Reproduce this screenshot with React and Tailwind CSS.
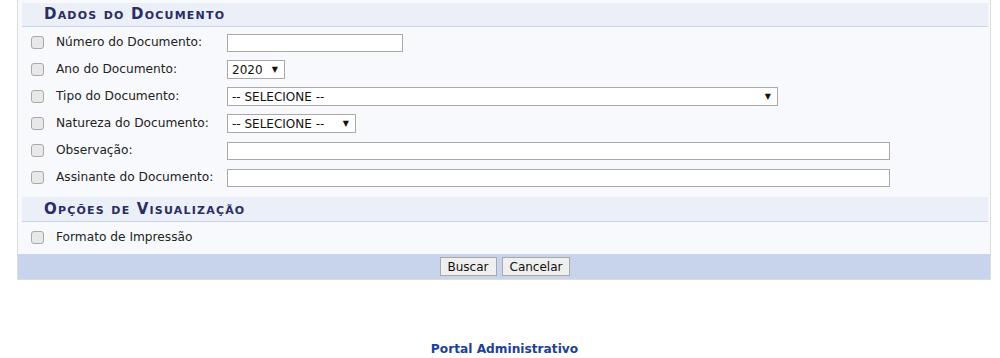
import React from 'react';

// Campos do formulário: label, tipo e largura do controle
const CAMPOS = [
  { label: 'Número do Documento:', tipo: 'input', w: 'w-[176px]' },
  { label: 'Ano do Documento:', tipo: 'select', w: 'w-[58px]', valor: '2020' },
  { label: 'Tipo do Documento:', tipo: 'select', w: 'w-[551px]', valor: '-- SELECIONE --' },
  { label: 'Natureza do Documento:', tipo: 'select', w: 'w-[129px]', valor: '-- SELECIONE --' },
  { label: 'Observação:', tipo: 'input', w: 'w-[663px]' },
  { label: 'Assinante do Documento:', tipo: 'input', w: 'w-[663px]' }
];

const Checkbox = () => (
  <span className="block w-[13px] h-[13px] rounded-[3px] border border-[#a8a8a8] bg-[#e8e8e8]" />
);

const Cabecalho = ({ children, alto = 'h-[24px]' }) => (
  <div className={`ml-[4px] mr-[2px] ${alto} bg-[#eaeff8] border-b border-[#c9d3ec] flex items-center pl-[22px]`}>
    <span className="text-[15px] font-bold tracking-[1.2px] text-[#2c2c62] [font-variant:small-caps]">
      {children}
    </span>
  </div>
);

const Linha = ({ label, children }) => (
  <div className="h-[27px] flex items-center">
    <div className="w-[38px] flex justify-end pr-[12px]">
      <Checkbox />
    </div>
    <div className="w-[171px] text-[#222] text-[12.2px]">{label}</div>
    {children}
  </div>
);

export default function App() {
  return (
    <div className="w-[1000px] h-[358px] bg-white font-['DejaVu_Sans',Verdana,sans-serif] text-[12px]">
      <div className="ml-[17px] w-[974px] border-x border-b border-[#dddddd] bg-[#f8f9fc] pt-[3px]">
        <Cabecalho>Dados do Documento</Cabecalho>
        <div className="pt-[2px]">
          {CAMPOS.map((c) => (
            <Linha key={c.label} label={c.label}>
              {c.tipo === 'input' ? (
                <div className={`${c.w} h-[18px] bg-white border border-[#a9a9a9]`} />
              ) : (
                <div
                  className={`${c.w} h-[19px] bg-white border border-[#a9a9a9] flex items-center justify-between pl-[4px] pr-[6px] text-[#111]`}
                >
                  <span>{c.valor}</span>
                  <span className="text-[8px]">▼</span>
                </div>
              )}
            </Linha>
          ))}
        </div>
        <div className="pt-[6px]">
          <Cabecalho alto="h-[25px]">Opções de Visualização</Cabecalho>
        </div>
        <div className="pt-[2px] pb-[3px]">
          <Linha label="Formato de Impressão" />
        </div>
        <div className="h-[25px] bg-[#c8d4eb] flex items-center justify-center gap-[5px] pl-[2px]">
          <button className="h-[19px] px-[7px] bg-[#efefef] border border-[#a9a9a9] text-[#111] text-[12px] leading-none">
            Buscar
          </button>
          <button className="h-[19px] px-[7px] bg-[#efefef] border border-[#a9a9a9] text-[#111] text-[12px] leading-none">
            Cancelar
          </button>
        </div>
      </div>
      <div className="pt-[60px] text-center pl-[9px] font-bold text-[#1c4196] text-[12.2px]">
        Portal Administrativo
      </div>
    </div>
  );
}
